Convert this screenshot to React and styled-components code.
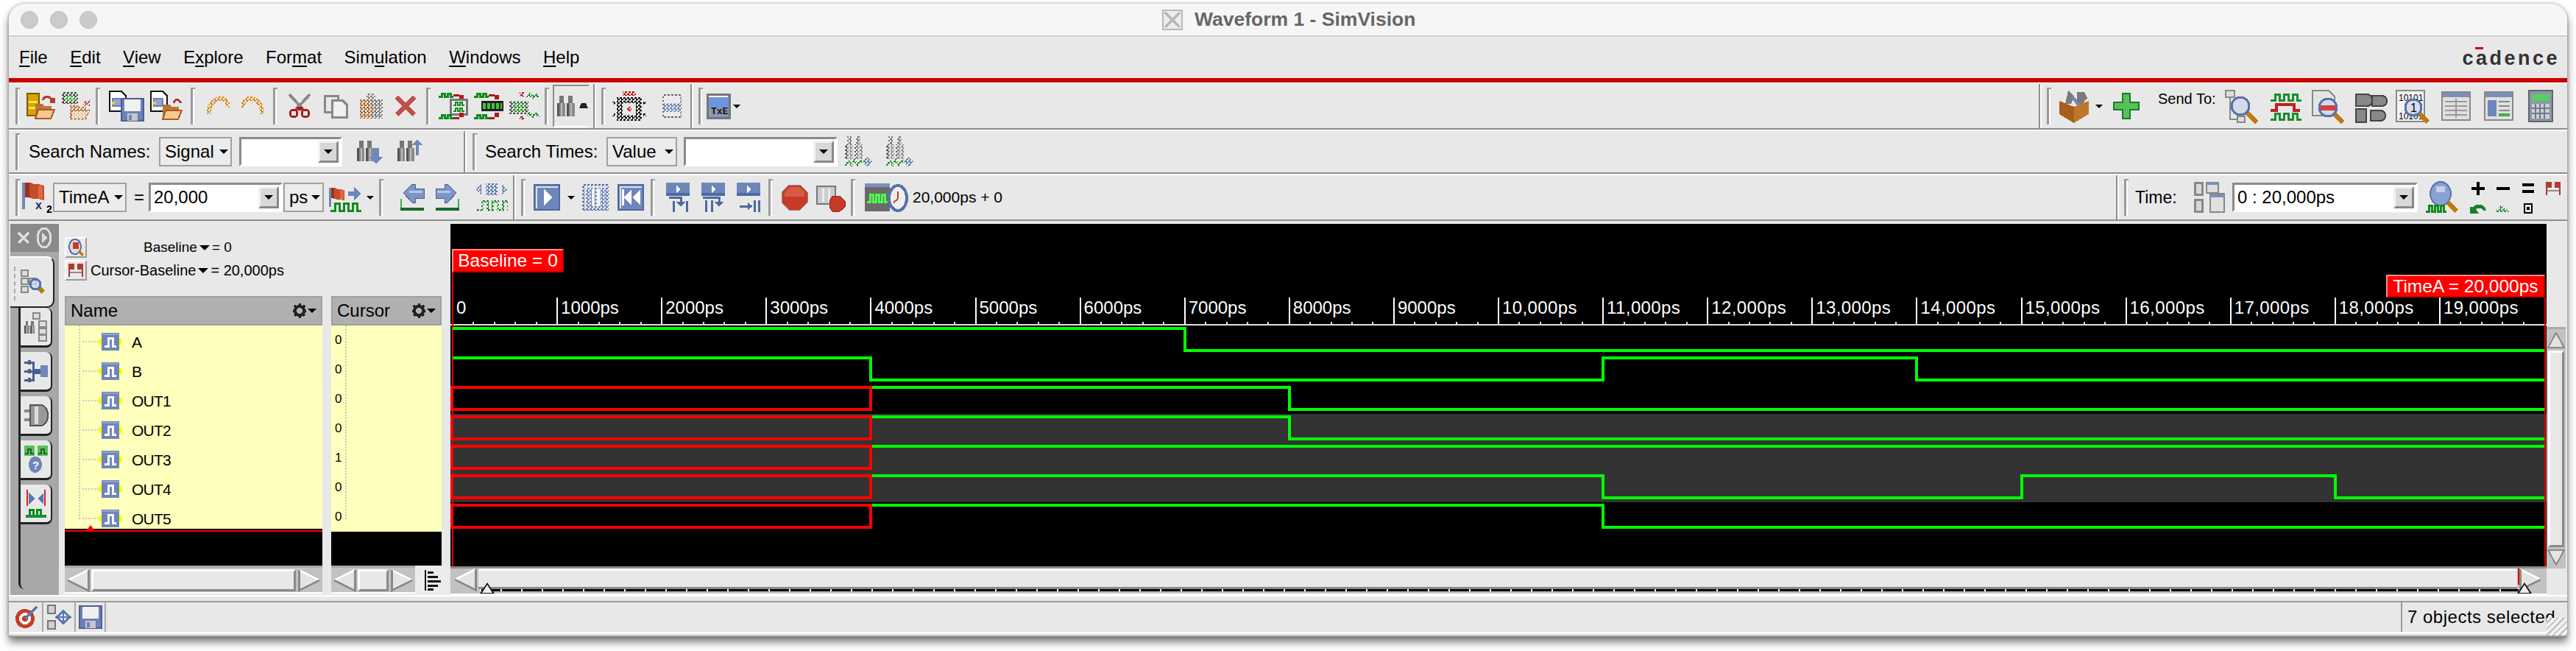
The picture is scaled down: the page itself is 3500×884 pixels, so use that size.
import styled, { createGlobalStyle } from 'styled-components'

const GlobalStyle = createGlobalStyle`
  html, body {
    margin: 0;
    width: 3500px;
    height: 884px;
    overflow: hidden;
    background: #fff;
  }
  body {
    font-family: "Liberation Sans", Arial, sans-serif;
    color: #000;
  }
`

const Window = styled.div`
  box-sizing: border-box;
  width: 3476px;
  height: 860px;
  margin: 5px 0 0 12px;
  background: #e8e8e8;
  border-radius: 22px 22px 0 0;
  border-bottom: 2px solid #999;
  box-shadow: 0 7px 12px rgba(0, 0, 0, 0.5), 0 0 4px rgba(0, 0, 0, 0.3);
  overflow: hidden;
  position: relative;
`

const TitleBar = styled.div`
  box-sizing: border-box;
  height: 45px;
  display: flex;
  align-items: center;
  background: #f6f6f6;
  border-bottom: 2px solid #cfcfcf;
  padding-left: 16px;
`
const Lights = styled.div`
  display: flex;
  gap: 16px;
`
const Light = styled.span`
  box-sizing: border-box;
  width: 24px;
  height: 24px;
  border-radius: 50%;
  background: #cbcbcb;
  border: 1px solid #bdbdbd;
`
const TitleText = styled.div`
  display: flex;
  align-items: center;
  gap: 16px;
  margin-left: 1447px;
  font-size: 26.5px;
  font-weight: 700;
  color: #666;
`
const MenuBar = styled.div`
  height: 56px;
  display: flex;
  align-items: center;
  gap: 30.5px;
  padding: 0 10px 0 14px;
  font-size: 24px;
`
const MenuItem = styled.span`
  white-space: pre;
`
const Under = styled.span`
  text-decoration: underline;
  text-underline-offset: 3px;
`
const Logo = styled.div`
  margin-left: auto;
  position: relative;
  top: 1px;
  font-size: 27px;
  font-weight: 700;
  letter-spacing: 3.5px;
  color: #333;
  &::before {
    content: '';
    position: absolute;
    left: 18px;
    top: 0;
    width: 11px;
    height: 3px;
    background: #c00;
  }
`
const RedRule = styled.div`
  height: 6px;
  background: #cc0000;
  border-bottom: 2px solid #fff;
`
const Bars = styled.div`
  background: #fff;
`
const Bar = styled.div`
  box-sizing: border-box;
  height: ${(p) => p.$h}px;
  display: flex;
  gap: 2px;
  border-bottom: 2px solid #8e8e8e;
  margin-bottom: ${(p) => p.$after || 2}px;
`
const Group = styled.div`
  box-sizing: border-box;
  width: ${(p) => (p.$w ? `${p.$w}px` : 'auto')};
  flex: ${(p) => (p.$w ? 'none' : 1)};
  display: flex;
  align-items: center;
  background: #e8e8e8;
  border-right: ${(p) => (p.$w ? '2px solid #8e8e8e' : 'none')};
  font-size: 24px;
`
const Gap = styled.span`
  flex: none;
  width: ${(p) => p.$w}px;
`
const Sep = styled.span`
  flex: none;
  position: relative;
  width: 3px;
  height: 50px;
  background: #9a9a9a;
  box-shadow: 2px 0 0 #fff;
  margin-right: 2px;
  &::before,
  &::after {
    content: '';
    position: absolute;
    left: 3px;
    width: 3px;
    height: 2px;
    background: #9a9a9a;
  }
  &::before {
    top: 0;
  }
  &::after {
    bottom: 0;
    background: #fff;
  }
`
const Text = styled.span`
  flex: none;
  width: ${(p) => (p.$w ? `${p.$w}px` : 'auto')};
  font-size: ${(p) => p.$size || 24}px;
  margin-bottom: ${(p) => p.$lift || 0}px;
  white-space: nowrap;
`
const Tri = styled.span`
  flex: none;
  display: inline-block;
  width: 0;
  height: 0;
  border-left: ${(p) => p.$s || 6}px solid transparent;
  border-right: ${(p) => p.$s || 6}px solid transparent;
  border-top: ${(p) => p.$s || 6}px solid #000;
`
const Drop = styled.div`
  box-sizing: border-box;
  flex: none;
  width: ${(p) => p.$w}px;
  height: 40px;
  display: flex;
  align-items: center;
  justify-content: space-between;
  padding: 0 3px 0 6px;
  background: #ececec;
  border: 2px solid #a0a0a0;
`
const Combo = styled.div`
  box-sizing: border-box;
  flex: none;
  width: ${(p) => p.$w}px;
  height: 40px;
  display: flex;
  align-items: center;
  justify-content: space-between;
  padding-left: 4px;
  background: #fff;
  border: 3px solid;
  border-color: #8a8a8a #fff #fff #8a8a8a;
`
const ComboBtn = styled.span`
  box-sizing: border-box;
  width: 28px;
  height: 30px;
  margin-right: 2px;
  display: flex;
  align-items: center;
  justify-content: center;
  background: #d8d8d8;
  border: 3px solid;
  border-color: #f2f2f2 #888 #888 #f2f2f2;
`
const MiniGrid = styled.div`
  display: grid;
  grid-template-columns: repeat(4, 34px);
  grid-template-rows: 30px 24px;
  justify-items: center;
  align-items: center;
`
const Toggled = styled.div`
  box-sizing: border-box;
  flex: none;
  width: 49px;
  height: 58px;
  display: flex;
  align-items: center;
  gap: 6px;
  padding-left: 4px;
  border: solid;
  border-width: 2px 0 2px 2px;
  border-color: #8e8e8e #fff #fff #8e8e8e;
`
// checker mask for the greyed out toolbar icons
const Dim = styled.div`
  flex: none;
  -webkit-mask-image: conic-gradient(#000 25%, transparent 0 50%, #000 0 75%, transparent 0);
  mask-image: conic-gradient(#000 25%, transparent 0 50%, #000 0 75%, transparent 0);
  -webkit-mask-size: 5px 5px;
  mask-size: 5px 5px;
`

const Main = styled.div`
  height: 504px;
  display: flex;
  padding-left: 2px;
`
const Strip = styled.div`
  width: 66px;
  flex: none;
  background: #a8a8a8;
  display: flex;
  flex-direction: column;
`
const StripHead = styled.div`
  height: 38px;
  background: #8a8a8a;
  display: flex;
  align-items: center;
  justify-content: center;
  gap: 8px;
  margin-bottom: 6px;
  color: #ddd;
`
const ActiveTab = styled.div`
  box-sizing: border-box;
  width: 60px;
  height: 70px;
  margin-bottom: 0;
  padding: 16px 0 0 14px;
  background: #e8e8e8;
  border-radius: 0 10px 10px 0;
  border: solid #222;
  border-width: 0 2px 2px 0;
  border-top: 2px solid #fff;
  position: relative;
  &::before {
    content: '';
    position: absolute;
    left: 5px;
    top: 12px;
    height: 46px;
    border-left: 2px dashed #aaa;
  }
`
const Tabs = styled.div`
  flex: 1;
  margin-left: 11px;
  margin-bottom: 8px;
  border-left: 3px solid #222;
  display: flex;
  flex-direction: column;
  gap: 6px;
  border-radius: 0 0 0 8px;
`
const Tab = styled.div`
  box-sizing: border-box;
  width: 43px;
  height: 54px;
  display: flex;
  align-items: center;
  justify-content: center;
  background: #e8e8e8;
  border: solid #222;
  border-width: 0 2px 3px 0;
  border-radius: 0 8px 8px 0;
`
const Side = styled.div`
  width: 532px;
  flex: none;
  display: flex;
  flex-direction: column;
`
const Summary = styled.div`
  box-sizing: border-box;
  height: 98px;
  padding: 18px 0 0 8px;
  display: flex;
  flex-direction: column;
  gap: 3px;
`
const SumRow = styled.div`
  display: flex;
  align-items: center;
  height: 28px;
  gap: ${(p) => p.$gap}px;
  font-size: ${(p) => p.$size}px;
`
const SumBtn = styled.span`
  box-sizing: border-box;
  width: 30px;
  height: 28px;
  flex: none;
  display: flex;
  align-items: center;
  justify-content: center;
  border: 2px solid;
  border-color: #fff #999 #999 #fff;
`
const SumText = styled.span`
  display: flex;
  align-items: center;
  gap: 3px;
  white-space: pre;
`
const Cols = styled.div`
  display: flex;
  gap: 12px;
  padding-left: 8px;
`
const Col = styled.div`
  width: ${(p) => p.$w}px;
  flex: none;
`
const ColHead = styled.div`
  box-sizing: border-box;
  height: 40px;
  display: flex;
  align-items: center;
  justify-content: space-between;
  padding: 0 6px;
  background: #b0b0b0;
  border: 2px solid #a0a0a0;
  font-size: 24px;
`
const HeadTools = styled.span`
  display: flex;
  align-items: center;
  gap: 2px;
`
const YellowBody = styled.div`
  box-sizing: border-box;
  height: 280px;
  padding-top: 2px;
  background: #ffffbc;
  position: relative;
  overflow: hidden;
  &::before {
    content: '';
    position: absolute;
    left: 19px;
    top: 0;
    height: 263px;
    border-left: 2px dotted #c8c8c8;
  }
`
const CursorLine = styled.div`
  position: absolute;
  left: 0;
  right: 0;
  bottom: 0;
  height: 2px;
  background: #f00;
  box-shadow: 0 -2px 0 #000;
  &::before {
    content: '';
    position: absolute;
    left: 28px;
    bottom: 0;
    width: 0;
    height: 0;
    border-left: 7px solid transparent;
    border-right: 7px solid transparent;
    border-bottom: 9px solid #f00;
  }
`
const SignalRow = styled.div`
  height: 40px;
  display: flex;
  align-items: center;
  padding-left: 19px;
  font-size: 21px;
  letter-spacing: -0.8px;
`
const Stub = styled.span`
  width: 27px;
  border-top: 2px dotted #c8c8c8;
`
const SignalName = styled.span`
  margin-left: 13px;
  position: relative;
  top: 1px;
`
const ValueRow = styled.div`
  box-sizing: border-box;
  height: 40px;
  padding: 0 0 4px 5px;
  display: flex;
  align-items: center;
  font-size: 17px;
`
const Void = styled.div`
  height: 46px;
  background: #000;
`
const SideScrolls = styled.div`
  height: 40px;
  display: flex;
  padding-left: 8px;
`
const Track = styled.div`
  box-sizing: border-box;
  flex: none;
  width: ${(p) => p.$w}px;
  margin-left: ${(p) => p.$ml || 0}px;
  height: 38px;
  display: flex;
  align-items: center;
  gap: 2px;
  padding: 0 2px;
  background: #c2c2c2;
  border-top: 3px solid #aaa;
  border-bottom: 2px solid #fff;
`
const Thumb = styled.div`
  box-sizing: border-box;
  flex: 1;
  height: 30px;
  background: #e8e8e8;
  border: 3px solid;
  border-color: #fff #8a8a8a #8a8a8a #fff;
`
const Corner = styled.div`
  width: 47px;
  display: flex;
  align-items: center;
  justify-content: center;
  background: #ececec;
`
const Flip = styled.span`
  display: block;
  flex: none;
  line-height: 0;
  transform: ${(p) => p.$t || 'none'};
`

const WaveArea = styled.div`
  flex: 1;
  display: flex;
  flex-direction: column;
`
const WaveTop = styled.div`
  height: 468px;
  display: flex;
`
const Canvas = styled.div`
  width: 2848px;
  height: 468px;
  flex: none;
  background: #000;
  position: relative;
  border-bottom: 3px solid #8a8a8a;
  box-sizing: border-box;
`
const Marker = styled.div`
  box-sizing: border-box;
  position: absolute;
  left: ${(p) => p.$x}px;
  top: ${(p) => p.$y}px;
  width: ${(p) => p.$w}px;
  height: ${(p) => p.$h}px;
  display: flex;
  align-items: center;
  justify-content: center;
  background: #f00;
  color: #fff;
  font-size: 24.5px;
  white-space: nowrap;
  border: 2px solid;
  border-color: #ff8a8a #c00000 #c00000 #ff8a8a;
`
const VScrollCol = styled.div`
  flex: 1;
  padding-top: 140px;
  display: flex;
`
const VTrack = styled.div`
  box-sizing: border-box;
  width: 26px;
  height: 328px;
  display: flex;
  flex-direction: column;
  align-items: center;
  gap: 2px;
  padding: 3px 0;
  background: #c2c2c2;
  border-top: 3px solid #aaa;
`
const VThumb = styled.div`
  box-sizing: border-box;
  flex: 1;
  width: 22px;
  background: #e8e8e8;
  border: 3px solid;
  border-color: #fff #8a8a8a #8a8a8a #fff;
`
const HScroll = styled.div`
  box-sizing: border-box;
  width: 2848px;
  height: 36px;
  position: relative;
  display: flex;
  align-items: flex-start;
  padding-left: 4px;
  background: #c2c2c2;
  border-bottom: 2px solid #fff;
`
const HThumb = styled.div`
  box-sizing: border-box;
  width: 2770px;
  height: 28px;
  margin: 0 2px;
  background: #e8e8e8;
  border: solid;
  border-width: 3px 0;
  border-color: #fff #000 #8a8a8a;
`
const TickStrip = styled.div`
  position: absolute;
  left: 40px;
  top: 28px;
  width: 2770px;
  height: 3px;
  background: repeating-linear-gradient(90deg, #fff 0 2px, #000 2px 28px);
`
const Pin = styled.span`
  position: absolute;
  left: ${(p) => p.$x}px;
  bottom: 0;
  width: 0;
  height: 0;
  border-left: 10px solid transparent;
  border-right: 10px solid transparent;
  border-bottom: 15px solid #111;
  &::after {
    content: '';
    position: absolute;
    left: -7px;
    top: 3px;
    width: 0;
    height: 0;
    border-left: 7px solid transparent;
    border-right: 7px solid transparent;
    border-bottom: 11px solid #eee;
  }
`
const EndLine = styled.span`
  position: absolute;
  left: 2809px;
  top: 0;
  width: 2px;
  height: 22px;
  background: #e00000;
`

const StatusArea = styled.div`
  border-top: 2px solid #fff;
  padding-top: 6px;
`
const StatusBar = styled.div`
  box-sizing: border-box;
  height: 44px;
  display: flex;
  padding-left: 2px;
  border-top: 2px solid #999;
  border-bottom: 2px solid #fff;
`
const StatusCell = styled.div`
  box-sizing: border-box;
  width: ${(p) => p.$w}px;
  flex: none;
  display: flex;
  align-items: center;
  justify-content: center;
  border-right: 2px solid #aaa;
`
const StatusMsg = styled.div`
  margin-left: auto;
  box-sizing: border-box;
  width: 226px;
  display: flex;
  align-items: center;
  padding-left: 7px;
  border-left: 2px solid #999;
  font-size: 24px;
  letter-spacing: 0.5px;
  white-space: nowrap;
`
const Grip = styled.div`
  position: absolute;
  right: 0;
  bottom: 0;
  width: 28px;
  height: 24px;
  background: repeating-linear-gradient(135deg, #f1f1f1 0 4px, #bbb 4px 6px);
`

const Ico = styled.svg`
  display: block;
  flex: none;
  overflow: visible;
  shape-rendering: crispEdges;
`
const I = ({ w, h, children }) => (
  <Ico width={w} height={h} viewBox={`0 0 ${w} ${h}`}>
    {children}
  </Ico>
)

const wave = (x, y, n, s, h) => {
  let d = `M${x} ${y}`
  for (let i = 0; i < n; i++) d += `h${s}v-${h}h${s}v${h}`
  return d + `h${s}`
}
const L = ({ d, c = '#128a1c', w = 3 }) => <path d={d} fill="none" stroke={c} strokeWidth={w} />

const Folder = ({ x, y }) => (
  <g transform={`translate(${x} ${y})`}>
    <path d="M1 1h10l2 3h10v5H1z" fill="#b9722f" />
    <path d="M1 4h22v17H1z" fill="#c0763a" />
    <path d="M5 9h22l-5 12H1z" fill="#f5c88e" stroke="#a85c22" strokeWidth="2" />
  </g>
)
const Doc = ({ x, y }) => (
  <g transform={`translate(${x} ${y})`}>
    <path d="M1 1h16l6 6v21H1z" fill="#fff" stroke="#111" strokeWidth="2" />
    <path d="M5 11h12v10H5z" fill="#8ea5d4" stroke="#6b82b8" strokeWidth="2" />
    <path d="M4 15h4v4H4z" fill="#f0d020" />
  </g>
)
const Mag = ({ x, y, r = 15, len = 14 }) => (
  <g transform={`translate(${x} ${y})`}>
    <path d={`M${r * 0.7} ${r * 0.7}l${len} ${len}`} stroke="#c07a10" strokeWidth="6" fill="none" />
    <circle cx="0" cy="0" r={r} fill="#ccd6ec" fillOpacity="0.75" stroke="#5873ac" strokeWidth="3" />
  </g>
)
const Binoc = ({ x = 0, y = 0 }) => (
  <g transform={`translate(${x} ${y})`}>
    <path d="M3 0h6v10H3zM15 0h6v10h-6z" fill="#777" />
    <path d="M0 10h11v18H0zM13 10h11v18H13z" fill="#8a8a8a" />
    <path d="M0 10h3v18H0zM13 10h3v18h-3z" fill="#555" />
    <path d="M5 10h2v18H5zM18 10h2v18h-2z" fill="#bbb" />
  </g>
)
const Flag = ({ x = 0, y = 0, s = 1 }) => (
  <g transform={`translate(${x} ${y}) scale(${s})`}>
    <path d="M0 2h4v36H0z" fill="#6f86b5" />
    <path d="M4 2h8l4 2h6l8 2v20l-8-2h-6l-8-2H4z" fill="#c64a2c" />
    <path d="M4 2h6v20H4z" fill="#9c3020" />
    <path d="M22 6h6v18h-6z" fill="#db6a40" />
  </g>
)
const TwoFlags = () => (
  <I w={22} h={20}>
    <path d="M1 1h8v8H3v10H1zM13 1h8v18h-2V9h-6z" fill="#b23a30" />
    <path d="M3 12h16v2H3z" fill="#9a8a8a" />
  </I>
)

const OpenDb = () => (
  <I w={40} h={38}>
    <path d="M1 2h16v30H1z" fill="#d9a400" stroke="#7a5a00" strokeWidth="2" />
    <path d="M3 12h12v3H3zM3 20h12v3H3z" fill="#f5e050" />
    <L d="M22 11c2-6 10-6 13 0" c="#b23a30" />
    <path d="M32 8h7v7h-7z" fill="#b23a30" />
    <Folder x={11} y={15} />
  </I>
)
const OpenRecent = () => (
  <Dim>
    <I w={41} h={38}>
      <path d="M0 0h22v16H0z" fill="#444" />
      <path d="M4 5h14v7H4z" fill="#30c030" />
      <L d="M30 12l8 6M38 12l-8 6" c="#b23a30" />
      <Folder x={10} y={16} />
    </I>
  </Dim>
)
const Floppy = ({ x, y }) => (
  <g transform={`translate(${x} ${y})`}>
    <path d="M1 1h30v30H1z" fill="#6b82b8" stroke="#4a5f90" strokeWidth="2" />
    <path d="M5 2h22v16H5z" fill="#f0f0f0" />
    <path d="M9 21h14v10H9z" fill="#c8c8c8" />
    <path d="M11 23h4v7h-4z" fill="#6b82b8" />
  </g>
)
const DocFloppy = () => (
  <I w={49} h={42}>
    <Doc x={0} y={0} />
    <Floppy x={16} y={10} />
  </I>
)
const DocFolder = () => (
  <I w={46} h={42}>
    <Doc x={0} y={0} />
    <L d="M32 17c2-6 7-6 10 0" c="#b23a30" />
    <Folder x={16} y={18} />
  </I>
)
const Undo = ({ flip }) => (
  <Dim>
    <Flip $t={flip ? 'scaleX(-1)' : 'none'}>
      <I w={32} h={26}>
        <path d="M4 24C3 10 12 3 20 3c6 0 10 4 11 12" fill="none" stroke="#d98a10" strokeWidth="6" />
      </I>
    </Flip>
  </Dim>
)
const Scissors = () => (
  <I w={30} h={32}>
    <L d="M1 0l20 22" c="#8a8a8a" w={4} />
    <L d="M29 0L9 22" c="#8a8a8a" w={4} />
    <circle cx="7" cy="26" r="5" fill="none" stroke="#b01818" strokeWidth="3" />
    <circle cx="23" cy="26" r="5" fill="none" stroke="#b01818" strokeWidth="3" />
    <path d="M11 17h8v5h-8z" fill="#b01818" />
  </I>
)
const Copy = () => (
  <I w={32} h={32}>
    <path d="M1 2h18v22H1z" fill="#e8e8e8" stroke="#888" strokeWidth="3" />
    <path d="M11 8h14l6 6v17H11z" fill="#f0f0f0" stroke="#888" strokeWidth="3" />
  </I>
)
const Paste = () => (
  <Dim>
    <I w={32} h={34}>
      <path d="M1 8h16v26H1z" fill="#b0682a" />
      <path d="M17 8h15v26H17z" fill="#777" />
      <path d="M10 0h12v8H10z" fill="#888" />
    </I>
  </Dim>
)
const Cross = () => (
  <I w={30} h={30}>
    <L d="M3 3l24 24M27 3L3 27" c="#c0504a" w={7} />
  </I>
)
const Trace1 = () => (
  <I w={40} h={38}>
    <L d={wave(0, 6, 2, 4, 4)} />
    <L d="M20 4h8" c="#b01818" />
    <path d="M28 4h6v6h-6z" fill="#b01818" />
    <path d="M16 10h22v20H16z" fill="#eee" stroke="#777" strokeWidth="3" />
    <L d={wave(20, 18, 2, 3, 4)} w={2} />
    <L d={wave(20, 26, 2, 3, 4)} w={2} />
    <L d={wave(0, 35, 2, 4, 4)} />
    <L d="M20 35h8" c="#b01818" />
    <path d="M28 28h6v6h-6z" fill="#b01818" />
  </I>
)
const Trace2 = () => (
  <I w={40} h={38}>
    <L d={wave(0, 6, 2, 4, 4)} />
    <L d="M20 4h8" c="#b01818" />
    <path d="M28 4h6v6h-6z" fill="#b01818" />
    <path d="M10 12h30v14H10z" fill="#222" />
    <path d="M12 15h26v8H12z" fill="#3cc83c" />
    <path d="M16 15h2v8h-2zM22 15h2v8h-2zM28 15h2v8h-2zM34 15h2v8h-2z" fill="#222" />
    <L d={wave(0, 35, 2, 4, 4)} />
    <L d="M20 35h8" c="#b01818" />
    <path d="M28 28h6v6h-6z" fill="#b01818" />
  </I>
)
const Trace3 = () => (
  <Dim>
    <I w={41} h={38}>
      <path d="M0 12h26v18H0z" fill="#555" />
      <path d="M6 14h16v14H6z" fill="#2a9a2a" />
      <path d="M14 0h6v6h-6zM14 32h6v6h-6z" fill="#b01818" />
      <L d="M24 8l4-5 4 4 4-4 4 5M24 34l4-5 4 4 4-4 4 5" />
    </I>
  </Dim>
)
const ChipDim = () => (
  <Dim>
    <I w={46} h={40}>
      <path d="M14 0h18v6H14z" fill="#c00" />
      <path d="M10 12h26v24H10z" fill="none" stroke="#111" strokeWidth="8" />
      <path d="M0 14h4v4H0zM42 14h4v4h-4zM0 30h4v4H0zM42 30h4v4h-4z" fill="#111" />
      <path d="M20 21h6v6h-6z" fill="#c00" />
    </I>
  </Dim>
)
const PageDim = () => (
  <Dim>
    <I w={26} h={32}>
      <path d="M1 1h24v30H1z" fill="#eee" stroke="#666" strokeWidth="2" />
      <path d="M2 12h22v12H2z" fill="#6f86ba" />
    </I>
  </Dim>
)
const Txe = () => (
  <I w={32} h={34}>
    <path d="M1 1h30v32H1z" fill="#6f93dd" stroke="#777" strokeWidth="3" />
    <path d="M3 3h26v2H3z" fill="#fff" />
    <path d="M3 20h26v11H3z" fill="#8d99ad" />
    <text x="6" y="28" fontSize="13" fontWeight="700" fontFamily="Liberation Mono, monospace" fill="#111" stroke="none">TxE</text>
  </I>
)
const BinocDown = ({ up }) => (
  <I w={38} h={34}>
    <g transform="scale(0.95 1)">
      <Binoc x={0} y={2} />
    </g>
    {up ? (
      <path d="M25 22V8h-5l7-8 7 8h-5v14z" fill="#6f86ba" />
    ) : (
      <path d="M22 12h8v12h5l-9 10-9-10h5z" fill="#6f86ba" />
    )}
  </I>
)
const BinocDim = () => (
  <Dim>
    <I w={44} h={42}>
      <g transform="scale(1 1.1)">
        <Binoc x={0} y={0} />
      </g>
      <L d="M0 40l5-6 4 5 4-6 4 6 6-6" w={3} />
      <path d="M30 28l7 7-7 7-7-7z" fill="#5a78b0" />
    </I>
  </Dim>
)
const BinocPlain = () => (
  <I w={24} h={28}>
    <Binoc />
  </I>
)
const FlagX2 = () => (
  <I w={42} h={44}>
    <Flag />
    <text x="18" y="38" fontSize="16" fontWeight="700" fill="#1c2f70" fontFamily="Liberation Sans, sans-serif">x</text>
    <text x="33" y="43" fontSize="14" fontWeight="700" fill="#000" fontFamily="Liberation Sans, sans-serif">2</text>
  </I>
)
const FlagWave = () => (
  <I w={45} h={40}>
    <Flag s={0.7} y={6} />
    <path d="M26 12h8V6l10 9-10 9v-6h-8z" fill="#6f86ba" />
    <L d={wave(2, 38, 3, 6, 10)} />
  </I>
)
const StepArrow = ({ flip }) => (
  <Flip $t={flip ? 'scaleX(-1)' : 'none'}>
    <I w={40} h={36}>
      <path d="M12 12L24 0h4v6h12v13H28v6h-4z" fill="#7e95c6" stroke="#4a5f90" strokeWidth="1" />
      <path d="M20 9h18v3H20z" fill="#b5c4e4" />
      <path d="M0 20h8v14h32v-2H10V20z" fill="#40b040" />
      <path d="M8 32h32v4H8z" fill="#17682a" />
    </I>
  </Flip>
)
const TraceDim = () => (
  <Dim>
    <I w={44} h={38}>
      <path d="M14 0h16v16H14z" fill="#5a78b0" />
      <path d="M0 8l8-7v14zM44 8l-8-7v14z" fill="#5a78b0" />
      <L d={wave(2, 36, 3, 7, 12)} />
    </I>
  </Dim>
)
const BlueBox = ({ children }) => (
  <I w={36} h={36}>
    <path d="M1 1h34v34H1z" fill="#6f86ba" stroke="#4e6a9e" strokeWidth="2" />
    <path d="M3 3h30v2H3zM3 3h2v30H3z" fill="#d9e2f2" />
    {children}
  </I>
)
const Play = () => (
  <BlueBox>
    <path d="M14 7l12 11-12 11z" fill="#fff" />
  </BlueBox>
)
const Pause = () => (
  <Dim>
    <BlueBox>
      <path d="M13 6h4v24h-4zM20 6h4v24h-4z" fill="#fff" />
    </BlueBox>
  </Dim>
)
const Rewind = () => (
  <BlueBox>
    <path d="M6 7h3v22H6zM19 7v22L9 18zM31 7v22L20 18z" fill="#fff" />
  </BlueBox>
)
const Step = ({ kind }) => (
  <I w={32} h={40}>
    <path d="M0 0h32v18H0z" fill="#6f86ba" />
    <path d="M0 14h32v4H0z" fill="#4e6a9e" />
    <path d="M14 4l6 5-6 5z" fill="#fff" />
    {kind === 0 && <L d="M4 20h16v8M10 25v15M28 25v15" c="#4e6a9e" />}
    {kind === 0 && <path d="M14 26h12l-6 7z" fill="#4e6a9e" />}
    {kind === 1 && <L d="M2 20h22v8M6 24v16M14 24v16" c="#4e6a9e" />}
    {kind === 1 && <path d="M18 26h12l-6 7z" fill="#4e6a9e" />}
    {kind === 2 && <L d="M4 32h16M24 24v16M30 24v16" c="#4e6a9e" />}
    {kind === 2 && <path d="M15 27l7 5-7 5z" fill="#4e6a9e" />}
  </I>
)
const StopRed = () => (
  <I w={37} h={36}>
    <path d="M11 1h15l10 10v14L26 35H11L1 25V11z" fill="#c83a28" stroke="#8a8a8a" strokeWidth="1" />
    <path d="M12 4h13l7 7v6H5v-6z" fill="#d85a44" />
  </I>
)
const GridStop = () => (
  <I w={40} h={36}>
    <path d="M1 3h25v24H1z" fill="#ccc" stroke="#777" strokeWidth="2" />
    <path d="M8 6h3v18H8zM16 6h3v18h-3z" fill="#eee" />
    <path d="M22 16h10l7 7v8l-7 6H22l-4-6v-8z" fill="#c83a28" stroke="#8a3020" strokeWidth="1" />
  </I>
)
const ClockWave = () => (
  <I w={58} h={40}>
    <path d="M0 1h34v38H0z" fill="#6a6a6a" />
    <path d="M0 1h34v5H0z" fill="#7d90ba" />
    <L d={wave(3, 26, 3, 4, 10)} c="#4cff4c" />
    <ellipse cx="45" cy="21" rx="12" ry="17" fill="#eee" stroke="#5873ac" strokeWidth="4" />
    <L d="M45 22V12M45 22l-6 5" c="#c83a28" w={2} />
  </I>
)
const ToolBox = () => (
  <I w={44} h={46}>
    <path d="M14 2l8 8-4 10h-8zM26 4h10l4 8-8 10h-6z" fill="#7a7a7a" />
    <path d="M20 8l12 14-4 3-10-14z" fill="#6f86ba" />
    <path d="M2 16l20 8 20-8v18l-20 12L2 34z" fill="#c0762a" />
    <path d="M2 16l20 8v22L2 34z" fill="#a55e1c" />
  </I>
)
const Plus = () => (
  <I w={36} h={36}>
    <path d="M13 1h10v12h12v10H23v12H13V23H1V13h12z" fill="#58c058" stroke="#1c7a2c" strokeWidth="2" />
  </I>
)
const SendHier = () => (
  <I w={44} h={44}>
    <path d="M1 1h12v9H1z" fill="#ddd" stroke="#888" strokeWidth="2" />
    <L d="M7 10v30h10" c="#888" w={2} />
    <path d="M17 36h10v8H17z" fill="#ddd" stroke="#888" strokeWidth="2" />
    <Mag x={21} y={22} r={12} len={14} />
  </I>
)
const SendWave = () => (
  <I w={40} h={40}>
    <L d={wave(0, 12, 3, 6, 8)} c="#17902c" />
    <L d="M0 26h8v-8h24v8h8" c="#c02020" w={4} />
    <L d={wave(0, 38, 3, 6, 8)} c="#17902c" />
  </I>
)
const SendDoc = () => (
  <I w={44} h={44}>
    <path d="M1 1h22l8 8v26H1z" fill="#e4e4e4" stroke="#888" strokeWidth="2" />
    <Mag x={22} y={24} r={12} len={12} />
    <path d="M12 21h20v7H12z" fill="#d04040" />
  </I>
)
const SendGates = () => (
  <I w={48} h={44}>
    <path d="M4 6h14c6 0 8 4 8 8s-2 8-8 8H4zM26 8h12c6 0 8 3 8 7s-2 7-8 7H26zM4 26h14v18H4zM24 28h12c6 0 8 3 8 7s-2 7-8 7H24z" fill="#888" stroke="#444" strokeWidth="2" />
  </I>
)
const SendMem = () => (
  <I w={46} h={44}>
    <path d="M1 1h38v42H1z" fill="#f4f4f4" stroke="#888" strokeWidth="2" />
    <text x="4" y="15" fontSize="12" fontFamily="Liberation Sans, sans-serif">10101</text>
    <text x="4" y="40" fontSize="12" fontFamily="Liberation Sans, sans-serif">10101</text>
    <Mag x={24} y={24} r={11} len={12} />
    <text x="20" y="30" fontSize="16" fontFamily="Liberation Sans, sans-serif">1</text>
  </I>
)
const SendTable = ({ panel }) => (
  <I w={40} h={40}>
    <path d="M1 1h38v38H1z" fill="#e0e0e0" stroke="#888" strokeWidth="2" />
    <path d="M2 2h36v6H2z" fill="#7d90ba" />
    {panel ? (
      <>
        <path d="M5 12h12v22H5z" fill="#6f86ba" />
        <path d="M20 13h15v2H20zM20 19h15v2H20zM20 25h15v2H20z" fill="#888" />
        <path d="M20 30h15v4H20z" fill="#3cb04c" />
      </>
    ) : (
      <path d="M5 13h30v2H5zM5 19h30v2H5zM5 25h30v2H5zM5 31h30v2H5zM19 10h2v26h-2z" fill="#999" />
    )}
  </I>
)
const SendCalc = () => (
  <I w={34} h={44}>
    <path d="M1 1h32v42H1z" fill="#8a98a8" stroke="#666" strokeWidth="2" />
    <path d="M5 6h24v9H5z" fill="#58d060" />
    <path d="M5 19h24v20H5z" fill="#c8d0d8" />
    <path d="M9 19h2v20H9zM15 19h2v20h-2zM21 19h2v20h-2zM5 24h24v2H5zM5 31h24v2H5z" fill="#778" />
  </I>
)
const Panes = () => (
  <I w={44} h={42}>
    <path d="M3 1h10v16H3zM3 24h10v16H3z" fill="#d8d8d8" stroke="#888" strokeWidth="3" />
    <path d="M19 1h16v14H19z" fill="#ddd" stroke="#888" strokeWidth="2" />
    <path d="M24 16h19v25H24z" fill="#e0e0e0" stroke="#888" strokeWidth="2" />
    <path d="M24 17h19v4H24zM19 1h16v3H19z" fill="#7d90ba" />
  </I>
)
const ZoomWave = () => (
  <I w={44} h={42}>
    <ellipse cx="20" cy="16" rx="14" ry="16" fill="#8aa0d0" stroke="#5873ac" strokeWidth="2" />
    <path d="M14 6h12v8H14z" fill="#c4d0ea" />
    <L d="M30 28l12 12" c="#c07a10" w={6} />
    <L d={wave(0, 40, 3, 4, 8)} />
  </I>
)
const PlusMini = () => (
  <I w={18} h={18}>
    <path d="M7 0h4v7h7v4h-7v7H7v-7H0V7h7z" fill="#000" />
  </I>
)
const MinusMini = () => (
  <I w={18} h={18}>
    <path d="M0 7h18v4H0z" fill="#000" />
  </I>
)
const EqualMini = () => (
  <I w={18} h={18}>
    <path d="M1 2h16v4H1zM1 11h16v4H1z" fill="#000" />
  </I>
)
const BackMini = () => (
  <I w={22} h={14}>
    <path d="M0 14V5h4c4-4 10-5 16 0l2 5h-3c-4-4-8-4-11-2l4 6z" fill="#17802c" />
  </I>
)
const ZoomDim = () => (
  <Dim>
    <I w={22} h={14}>
      <path d="M0 12L8 2l12 10z" fill="#2f8a3c" />
    </I>
  </Dim>
)
const BoxMini = () => (
  <I w={12} h={14}>
    <path d="M1 1h10v12H1z" fill="none" stroke="#000" strokeWidth="2" />
    <path d="M4 5h4v4H4z" fill="#000" />
  </I>
)
const SigIcon = () => (
  <I w={32} h={24}>
    <path d="M0 8h4v8H0zM28 8h4v8h-4z" fill="#ffff00" />
    <path d="M4 0h24v24H4z" fill="#6f86ba" />
    <path d="M5 1h22v2H5z" fill="#90a4cf" />
    <L d="M8 18h5V7h6v11h5" c="#fff" w={3} />
  </I>
)
const Gear = () => (
  <I w={18} h={20}>
    <circle cx="9" cy="10" r="6" fill="none" stroke="#222" strokeWidth="4" />
    <L d="M9 0v4M9 16v4M0 10h3M15 10h3M2 3l3 3M13 14l3 3M16 3l-3 3M5 14l-3 3" c="#222" />
  </I>
)
const ScrollArrow = () => (
  <I w={32} h={30}>
    <path d="M30 1L2 15l28 14z" fill="#e4e4e4" />
    <path d="M30 1L2 15" stroke="#fff" strokeWidth="3" fill="none" />
    <path d="M2 15l28 14V1" stroke="#8a8a8a" strokeWidth="3" fill="none" />
  </I>
)
const TabHier = () => (
  <I w={32} h={32}>
    <path d="M1 1h9v8H1zM12 12h9v8h-9zM1 12h9v8H1zM1 23h9v8H1z" fill="#ddd" stroke="#888" strokeWidth="2" />
    <Mag x={20} y={20} r={7} len={6} />
  </I>
)
const TabDesign = () => (
  <I w={32} h={40}>
    <g transform="scale(0.6 0.6) translate(0 20)">
      <Binoc />
    </g>
    <path d="M12 1h9v8h-9zM20 12h10v8H20zM20 22h10v8H20zM20 31h10v8H20z" fill="#ddd" stroke="#888" strokeWidth="2" />
  </I>
)
const TabPorts = () => (
  <I w={32} h={32}>
    <L d="M0 4h12v10h10M0 16h22M0 28h12V18h10" c="#4a5f90" />
    <path d="M22 8h10v16H22z" fill="#6f86ba" />
    <path d="M5 1h4v6H5zM5 13h4v6H5zM5 25h4v6H5z" fill="#4a5f90" />
  </I>
)
const TabGate = () => (
  <I w={32} h={30}>
    <path d="M0 7h8v4H0zM0 19h8v4H0z" fill="#888" />
    <path d="M8 1h14c6 0 10 6 10 14s-4 14-10 14H8z" fill="#999" stroke="#555" strokeWidth="2" />
    <path d="M14 3h5v24h-5z" fill="#ddd" />
  </I>
)
const TabQuery = () => (
  <I w={32} h={38}>
    <path d="M0 0h14v14H0zM18 0h14v14H18z" fill="#58c058" />
    <L d={wave(1, 11, 1, 4, 6)} c="#17682a" w={2} />
    <L d={wave(19, 11, 1, 4, 6)} c="#17682a" w={2} />
    <ellipse cx="15" cy="26" rx="9" ry="11" fill="#6f86ba" />
    <text x="11" y="32" fontSize="15" fontWeight="700" fill="#fff" fontFamily="Liberation Sans, sans-serif">?</text>
  </I>
)
const TabSqueeze = () => (
  <I w={28} h={38}>
    <path d="M1 0h2v22H1zM25 0h2v22h-2z" fill="#e02020" />
    <path d="M4 4l8 8-8 8zM24 4l-8 8 8 8z" fill="#5a78b0" />
    <L d={wave(0, 36, 2, 5, 9)} />
    <path d="M0 34h28v4H0z" fill="#17902c" />
  </I>
)
const CircleArrow = () => (
  <I w={22} h={30}>
    <ellipse cx="11" cy="15" rx="9" ry="13" fill="none" stroke="#ddd" strokeWidth="3" />
    <path d="M8 7l7 8-7 8z" fill="#ddd" />
  </I>
)
const CloseX = () => (
  <I w={18} h={18}>
    <L d="M2 2l14 14M16 2L2 16" c="#ddd" w={3} />
  </I>
)
const SumFlag = () => (
  <I w={22} h={24}>
    <ellipse cx="10" cy="11" rx="8" ry="10" fill="#ddd" stroke="#5873ac" strokeWidth="2" />
    <path d="M7 5h8v9H7z" fill="#c83a28" />
    <path d="M15 17l6 6" stroke="#c07a10" strokeWidth="4" />
  </I>
)
const TargetIco = () => (
  <I w={32} h={32}>
    <circle cx="14" cy="18" r="13" fill="#c83a28" />
    <circle cx="14" cy="18" r="8" fill="#f2f2f2" />
    <circle cx="14" cy="18" r="4" fill="#c83a28" />
    <L d="M14 18L30 2" c="#5a78b0" />
  </I>
)
const SyncIco = () => (
  <I w={32} h={34}>
    <path d="M1 1h10v11H1zM1 22h10v11H1z" fill="#d0d0d0" stroke="#777" strokeWidth="2" />
    <path d="M22 9l9 8-9 8-9-8z" fill="none" stroke="#5a78b0" strokeWidth="3" />
    <path d="M13 17h18M22 9v16" stroke="#5a78b0" strokeWidth="2" />
  </I>
)
const SaveIco = () => (
  <I w={32} h={32}>
    <Floppy x={0} y={0} />
  </I>
)
const Lines = () => (
  <I w={22} h={28}>
    <path d="M0 0h2v28H0zM4 2h8v3H4zM4 8h14v3H4zM4 14h18v3H4zM4 20h14v3H4zM4 25h8v3H4z" fill="#111" />
  </I>
)
const XIcon = () => (
  <I w={28} h={28}>
    <path d="M1 1h26v26H1z" fill="#ececec" stroke="#b8b8b8" strokeWidth="2" />
    <L d="M4 4l20 20M24 4L4 24" c="#b8b8b8" w={3} />
  </I>
)

const menu = [
  ['', 'F', 'ile'],
  ['', 'E', 'dit'],
  ['', 'V', 'iew'],
  ['E', 'x', 'plore'],
  ['For', 'm', 'at'],
  ['Sim', 'u', 'lation'],
  ['', 'W', 'indows'],
  ['', 'H', 'elp'],
]
const signals = [
  { name: 'A', value: 0, edges: [[0, 1], [7000, 0]] },
  { name: 'B', value: 0, edges: [[0, 1], [4000, 0], [11000, 1], [14000, 0]] },
  { name: 'OUT1', value: 0, edges: [[4000, 1], [8000, 0]], x: true },
  { name: 'OUT2', value: 0, edges: [[4000, 1], [8000, 0]], x: true },
  { name: 'OUT3', value: 1, edges: [[4000, 1]], x: true },
  { name: 'OUT4', value: 0, edges: [[4000, 1], [11000, 0], [15000, 1], [18000, 0]], x: true },
  { name: 'OUT5', value: 0, edges: [[4000, 1], [11000, 0]], x: true },
]

// canvas origin sits at 612,304 of the window shot
const tx = (t) => 3 + t * 0.1421
const rowY = (i) => 142 + i * 40

const signalPath = (s, i) => {
  const hi = rowY(i)
  const lo = hi + 30
  let d = ''
  s.edges.forEach(([t, v], k) => {
    const y = v ? hi : lo
    d += k === 0 ? `M${tx(t)} ${y}` : `H${tx(t)}V${y}`
  })
  return d + `H${tx(20000)}`
}

function Waves() {
  const ticks = []
  for (let k = 0; k < 20; k++) {
    const x = tx(k * 1000)
    if (k > 0) ticks.push(<path key={`t${k}`} d={`M${x} 100V136`} stroke="#fff" strokeWidth="2" />)
    for (let m = 1; m < 5; m++) {
      ticks.push(<path key={`s${k}-${m}`} d={`M${x + m * 28.4} 133V136`} stroke="#ddd" strokeWidth="2" />)
    }
    const label = k === 0 ? '0' : k < 10 ? `${k}000ps` : `${k},000ps`
    ticks.push(
      <text key={`l${k}`} x={x + 5} y="122" fill="#fff" fontSize="24" letterSpacing={k < 10 ? 0 : 0.4} fontFamily="Liberation Sans, sans-serif">
        {label}
      </text>
    )
  }
  return (
    <Ico width={2848} height={465} viewBox="0 0 2848 465">
      <rect x="0" y="258" width="2848" height="120" fill="#333" />
      {ticks}
      <rect x="0" y="136" width="2848" height="2" fill="#e0e0e0" />
      <path d="M2.5 66V465" stroke="#e00000" strokeWidth="2" />
      <path d="M2845.5 100V465" stroke="#e00000" strokeWidth="2" />
      {signals.map((s, i) => (
        <path key={s.name} d={signalPath(s, i)} fill="none" stroke="#00ff00" strokeWidth="4" />
      ))}
      {signals.map((s, i) =>
        s.x ? (
          <rect key={s.name} x="2" y={rowY(i)} width={tx(4000) - 2} height="30" fill="none" stroke="#ff0000" strokeWidth="4" />
        ) : null
      )}
    </Ico>
  )
}

export default function App() {
  return (
    <>
      <GlobalStyle />
      <Window>
        <TitleBar>
          <Lights>
            <Light />
            <Light />
            <Light />
          </Lights>
          <TitleText>
            <XIcon />
            Waveform 1 - SimVision
          </TitleText>
        </TitleBar>
        <MenuBar>
          {menu.map(([a, u, b]) => (
            <MenuItem key={a + u + b}>
              {a}
              <Under>{u}</Under>
              {b}
            </MenuItem>
          ))}
          <Logo>cadence</Logo>
        </MenuBar>
        <RedRule />
        <Bars>
          <Bar $h={62}>
            <Group $w={796}>
              <Gap $w={9} />
              <Sep />
              <Gap $w={10} />
              <OpenDb />
              <Gap $w={8} />
              <OpenRecent />
              <Gap $w={5} />
              <Sep />
              <Gap $w={13} />
              <DocFloppy />
              <Gap $w={7} />
              <DocFolder />
              <Gap $w={9} />
              <Sep />
              <Gap $w={16} />
              <Undo />
              <Gap $w={16} />
              <Undo flip />
              <Gap $w={11} />
              <Sep />
              <Gap $w={16} />
              <Scissors />
              <Gap $w={18} />
              <Copy />
              <Gap $w={16} />
              <Paste />
              <Gap $w={16} />
              <Cross />
              <Gap $w={13} />
              <Sep />
              <Gap $w={12} />
              <Trace1 />
              <Gap $w={8} />
              <Trace2 />
              <Gap $w={8} />
              <Trace3 />
              <Gap $w={7} />
              <Sep />
              <Gap $w={6} />
              <Toggled>
                <BinocPlain />
                <I w={12} h={8}>
                  <path d="M3 0h6l3 7H0z" fill="#222" />
                </I>
              </Toggled>
            </Group>
            <Group $w={130}>
              <Gap $w={7} />
              <Sep />
              <Gap $w={10} />
              <ChipDim />
              <Gap $w={22} />
              <PageDim />
            </Group>
            <Group $w={1830}>
              <Gap $w={7} />
              <Sep />
              <Gap $w={6} />
              <Txe />
              <Gap $w={4} />
              <Tri $s={5} />
            </Group>
            <Group>
              <Gap $w={7} />
              <Sep />
              <Gap $w={10} />
              <ToolBox />
              <Gap $w={7} />
              <Tri $s={5} />
              <Gap $w={14} />
              <Plus />
              <Gap $w={25} />
              <Text $w={80} $size={20} $lift={20}>Send To:</Text>
              <Gap $w={11} />
              <SendHier />
              <Gap $w={18} />
              <SendWave />
              <Gap $w={16} />
              <SendDoc />
              <Gap $w={12} />
              <SendGates />
              <Gap $w={10} />
              <SendMem />
              <Gap $w={16} />
              <SendTable />
              <Gap $w={18} />
              <SendTable panel />
              <Gap $w={20} />
              <SendCalc />
            </Group>
          </Bar>
          <Bar $h={58}>
            <Group $w={620}>
              <Gap $w={9} />
              <Sep />
              <Gap $w={13} />
              <Text $w={169}>Search Names:</Text>
              <Gap $w={8} />
              <Drop $w={99}>
                Signal
                <Tri />
              </Drop>
              <Gap $w={10} />
              <Combo $w={140}>
                <span />
                <ComboBtn>
                  <Tri />
                </ComboBtn>
              </Combo>
              <Gap $w={20} />
              <BinocDown />
              <Gap $w={17} />
              <BinocDown up />
            </Group>
            <Group>
              <Gap $w={8} />
              <Sep />
              <Gap $w={12} />
              <Text $w={156}>Search Times:</Text>
              <Gap $w={9} />
              <Drop $w={96}>
                Value
                <Tri />
              </Drop>
              <Gap $w={9} />
              <Combo $w={209}>
                <span />
                <ComboBtn>
                  <Tri />
                </ComboBtn>
              </Combo>
              <Gap $w={10} />
              <BinocDim />
              <Gap $w={12} />
              <BinocDim />
            </Group>
          </Bar>
          <Bar $h={62} $after={4}>
            <Group $w={687}>
              <Gap $w={9} />
              <Sep />
              <Gap $w={4} />
              <FlagX2 />
              <Drop $w={100}>
                TimeA
                <Tri />
              </Drop>
              <Gap $w={10} />
              <Text $w={11}>=</Text>
              <Gap $w={9} />
              <Combo $w={182}>
                20,000
                <ComboBtn>
                  <Tri />
                </ComboBtn>
              </Combo>
              <Gap $w={1} />
              <Drop $w={55}>
                ps
                <Tri />
              </Drop>
              <Gap $w={7} />
              <FlagWave />
              <Gap $w={6} />
              <Tri $s={5} />
              <Gap $w={7} />
              <Sep />
              <Gap $w={16} />
              <StepArrow />
              <Gap $w={16} />
              <StepArrow flip />
              <Gap $w={14} />
              <TraceDim />
            </Group>
            <Group $w={2176}>
              <Gap $w={7} />
              <Sep />
              <Gap $w={12} />
              <Play />
              <Gap $w={10} />
              <Tri $s={5} />
              <Gap $w={10} />
              <Pause />
              <Gap $w={12} />
              <Rewind />
              <Gap $w={9} />
              <Sep />
              <Gap $w={16} />
              <Step kind={0} />
              <Gap $w={16} />
              <Step kind={1} />
              <Gap $w={16} />
              <Step kind={2} />
              <Gap $w={11} />
              <Sep />
              <Gap $w={12} />
              <StopRed />
              <Gap $w={11} />
              <GridStop />
              <Gap $w={7} />
              <Sep />
              <Gap $w={14} />
              <ClockWave />
              <Gap $w={7} />
              <Text $size={21}>20,000ps + 0</Text>
            </Group>
            <Group>
              <Gap $w={7} />
              <Sep />
              <Gap $w={10} />
              <Text $w={60} $size={23}>Time:</Text>
              <Gap $w={18} />
              <Panes />
              <Gap $w={10} />
              <Combo $w={252}>
                0 : 20,000ps
                <ComboBtn>
                  <Tri />
                </ComboBtn>
              </Combo>
              <Gap $w={11} />
              <ZoomWave />
              <Gap $w={10} />
              <MiniGrid>
                <PlusMini />
                <MinusMini />
                <EqualMini />
                <TwoFlags />
                <BackMini />
                <ZoomDim />
                <BoxMini />
              </MiniGrid>
            </Group>
          </Bar>
        </Bars>
        <Main>
          <Strip>
            <StripHead>
              <CloseX />
              <CircleArrow />
            </StripHead>
            <ActiveTab>
              <TabHier />
            </ActiveTab>
            <Tabs>
              <Tab>
                <TabDesign />
              </Tab>
              <Tab>
                <TabPorts />
              </Tab>
              <Tab>
                <TabGate />
              </Tab>
              <Tab>
                <TabQuery />
              </Tab>
              <Tab>
                <TabSqueeze />
              </Tab>
            </Tabs>
          </Strip>
          <Side>
            <Summary>
              <SumRow $gap={77} $size={19}>
                <SumBtn>
                  <SumFlag />
                </SumBtn>
                <SumText>
                  Baseline
                  <Tri $s={7} />= 0
                </SumText>
              </SumRow>
              <SumRow $gap={5} $size={20}>
                <SumBtn>
                  <TwoFlags />
                </SumBtn>
                <SumText>
                  Cursor-Baseline
                  <Tri $s={7} />= 20,000ps
                </SumText>
              </SumRow>
            </Summary>
            <Cols>
              <Col $w={350}>
                <ColHead>
                  Name
                  <HeadTools>
                    <Gear />
                    <Tri />
                  </HeadTools>
                </ColHead>
                <YellowBody>
                  {signals.map((s) => (
                    <SignalRow key={s.name}>
                      <Stub />
                      <SigIcon />
                      <SignalName>{s.name}</SignalName>
                    </SignalRow>
                  ))}
                  <CursorLine />
                </YellowBody>
                <Void />
              </Col>
              <Col $w={150}>
                <ColHead>
                  Cursor
                  <HeadTools>
                    <Gear />
                    <Tri />
                  </HeadTools>
                </ColHead>
                <YellowBody>
                  {signals.map((s) => (
                    <ValueRow key={s.name}>{s.value}</ValueRow>
                  ))}
                </YellowBody>
                <Void />
              </Col>
            </Cols>
            <SideScrolls>
              <Track $w={350}>
                <ScrollArrow />
                <Thumb />
                <Flip $t="scaleX(-1)">
                  <ScrollArrow />
                </Flip>
              </Track>
              <Track $w={114} $ml={12}>
                <ScrollArrow />
                <Thumb />
                <Flip $t="scaleX(-1)">
                  <ScrollArrow />
                </Flip>
              </Track>
              <Corner>
                <Lines />
              </Corner>
            </SideScrolls>
          </Side>
          <WaveArea>
            <WaveTop>
              <Canvas>
                <Waves />
                <Marker $x={2} $y={34} $w={152} $h={32}>Baseline = 0</Marker>
                <Marker $x={2630} $y={69} $w={216} $h={31}>TimeA = 20,000ps</Marker>
              </Canvas>
              <VScrollCol>
                <VTrack>
                  <Flip $t="rotate(90deg)">
                    <I w={24} h={24}>
                      <path d="M22 1L2 12l20 11z" fill="#e4e4e4" stroke="#8a8a8a" strokeWidth="2" />
                    </I>
                  </Flip>
                  <VThumb />
                  <Flip $t="rotate(-90deg)">
                    <I w={24} h={24}>
                      <path d="M22 1L2 12l20 11z" fill="#e4e4e4" stroke="#8a8a8a" strokeWidth="2" />
                    </I>
                  </Flip>
                </VTrack>
              </VScrollCol>
            </WaveTop>
            <HScroll>
              <ScrollArrow />
              <HThumb />
              <Flip $t="scaleX(-1)">
                <ScrollArrow />
              </Flip>
              <TickStrip />
              <EndLine />
              <Pin $x={40} />
              <Pin $x={2808} />
            </HScroll>
          </WaveArea>
        </Main>
        <StatusArea>
          <StatusBar>
            <StatusCell $w={45}>
              <TargetIco />
            </StatusCell>
            <StatusCell $w={44}>
              <SyncIco />
            </StatusCell>
            <StatusCell $w={41}>
              <SaveIco />
            </StatusCell>
            <StatusMsg>7 objects selected</StatusMsg>
          </StatusBar>
        </StatusArea>
        <Grip />
      </Window>
    </>
  )
}
